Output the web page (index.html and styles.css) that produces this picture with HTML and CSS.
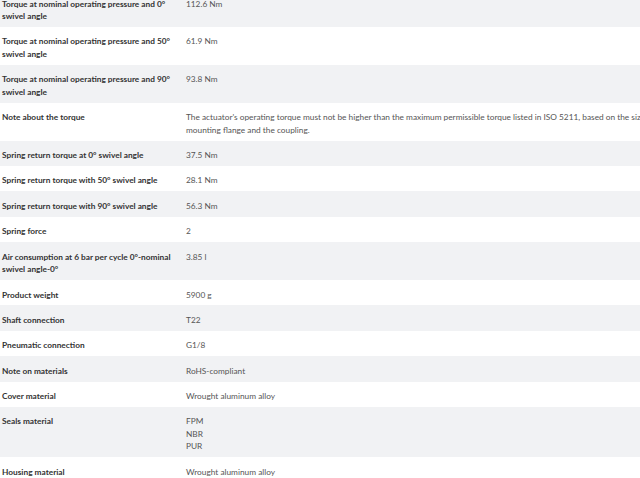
FILE: index.html
```html
<!DOCTYPE html>
<html lang="en">
<head>
<meta charset="utf-8">
<title>Technical data</title>
<link rel="stylesheet" href="styles.css">
</head>
<body>
<div class="specs">
  <div class="row"><div class="label">Torque at nominal operating pressure and 0° swivel angle</div><div class="value">112.6 Nm</div></div>
  <div class="row"><div class="label">Torque at nominal operating pressure and 50° swivel angle</div><div class="value">61.9 Nm</div></div>
  <div class="row"><div class="label">Torque at nominal operating pressure and 90° swivel angle</div><div class="value">93.8 Nm</div></div>
  <div class="row"><div class="label">Note about the torque</div><div class="value nowrap">The actuator's operating torque must not be higher than the maximum permissible torque listed in ISO 5211, based on the size of the<br>mounting flange and the coupling.</div></div>
  <div class="row"><div class="label">Spring return torque at 0° swivel angle</div><div class="value">37.5 Nm</div></div>
  <div class="row"><div class="label">Spring return torque with 50° swivel angle</div><div class="value">28.1 Nm</div></div>
  <div class="row"><div class="label">Spring return torque with 90° swivel angle</div><div class="value">56.3 Nm</div></div>
  <div class="row"><div class="label">Spring force</div><div class="value">2</div></div>
  <div class="row"><div class="label">Air consumption at 6 bar per cycle 0°-nominal swivel angle-0°</div><div class="value">3.85 l</div></div>
  <div class="row"><div class="label">Product weight</div><div class="value">5900 g</div></div>
  <div class="row"><div class="label">Shaft connection</div><div class="value">T22</div></div>
  <div class="row"><div class="label">Pneumatic connection</div><div class="value">G1/8</div></div>
  <div class="row"><div class="label">Note on materials</div><div class="value">RoHS-compliant</div></div>
  <div class="row"><div class="label">Cover material</div><div class="value">Wrought aluminum alloy</div></div>
  <div class="row"><div class="label">Seals material</div><div class="value">FPM<br>NBR<br>PUR</div></div>
  <div class="row"><div class="label">Housing material</div><div class="value">Wrought aluminum alloy</div></div>
</div>
</body>
</html>
```
FILE: styles.css
```css
html, body {
  margin: 0;
  padding: 0;
  overflow: hidden;
  background: #ffffff;
}
body {
  font-family: "Lato", "Noto Sans", sans-serif;
  font-size: 8.3px;
  line-height: 12.5px;
  color: #333;
}
.specs {
  margin-top: -11px;
  width: 720px;
}
.row {
  display: grid;
  grid-template-columns: 186px 1fr;
  padding: 8.5px 0 4.4px;
}
.row:nth-child(odd) {
  background: #f1f2f4;
}
.label {
  font-weight: 700;
  color: #333;
  padding: 0 12px 0 2px;
}
.value {
  color: #555;
}
.nowrap {
  white-space: nowrap;
}
```
